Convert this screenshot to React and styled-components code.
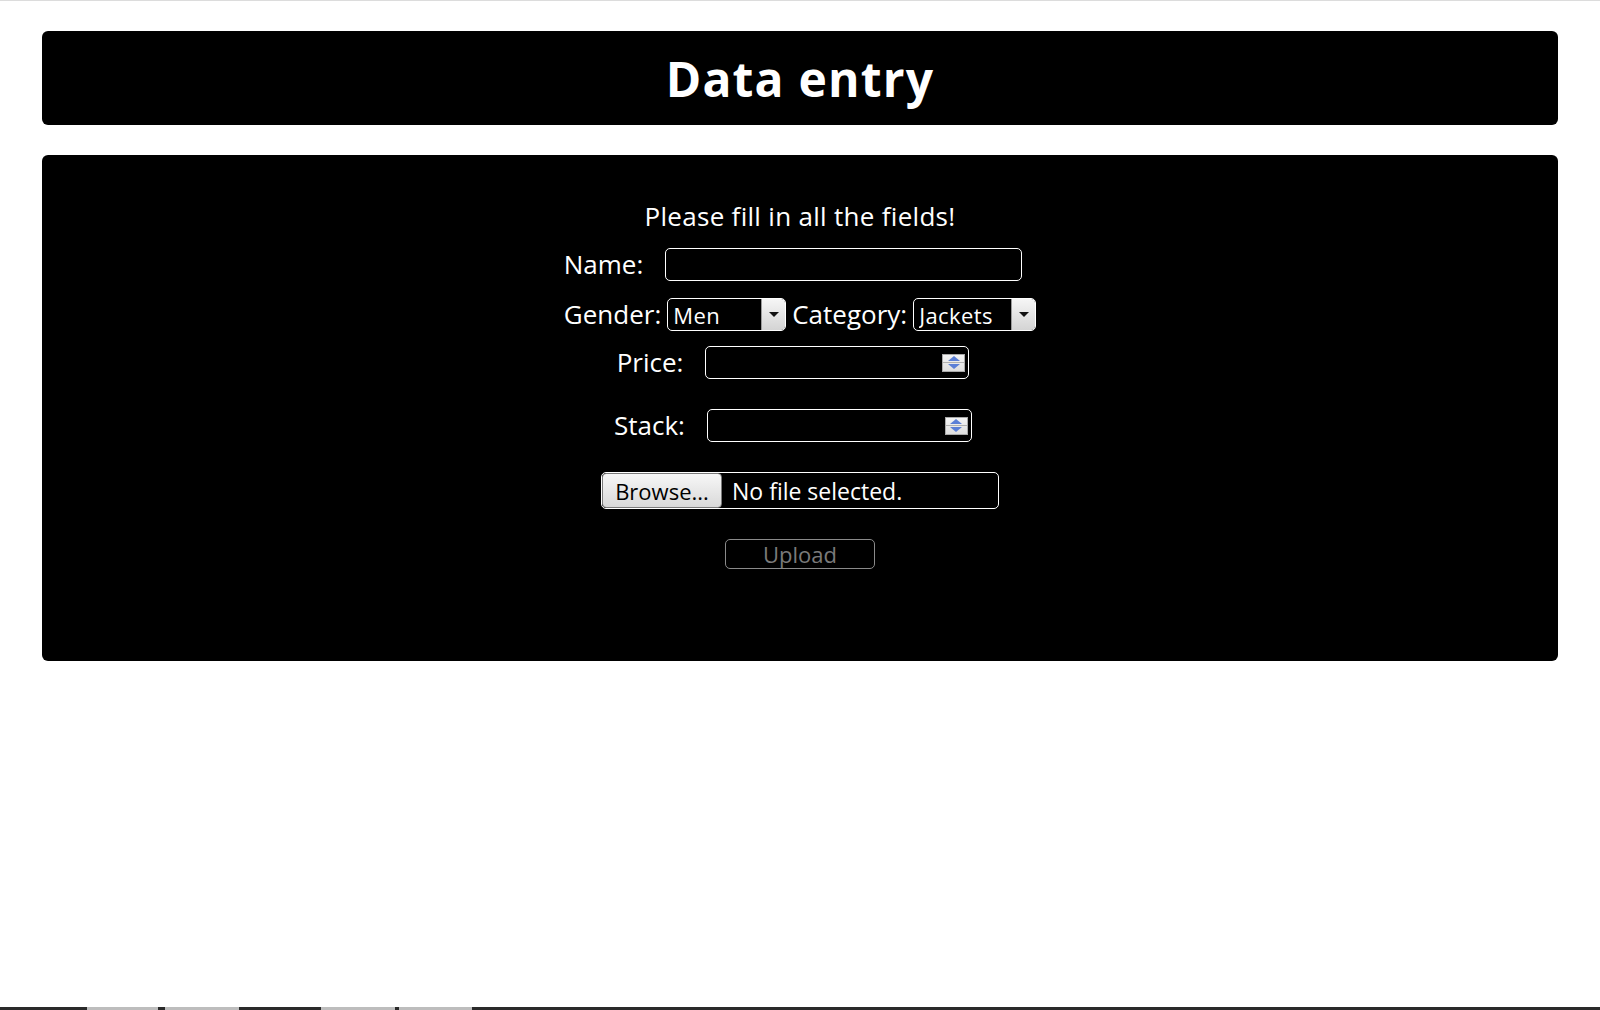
import React, { useState } from "react";
import styled, { createGlobalStyle } from "styled-components";

const GlobalStyle = createGlobalStyle`
    html, body {
        margin: 0;
        padding: 0;
        background: #ffffff;
    }
    body {
        border-top: 1px solid #dcdcdc;
        font-family: "Open Sans", "Noto Sans", sans-serif;
        min-height: 1009px;
    }
`;

const Page = styled.div`
    padding: 30px 42px 0px 42px;
    display: flex;
    flex-direction: column;
    gap: 30px;
`;

const Header = styled.header`
    background: #000;
    border-radius: 6px;
    height: 94px;
    display: flex;
    align-items: center;
    justify-content: center;
`;

const Title = styled.h1`
    margin: 0;
    color: #fff;
    font-size: 48px;
    font-weight: 700;
    letter-spacing: 1.2px;
`;

const Panel = styled.main`
    background: #000;
    border-radius: 6px;
    height: 506px;
    box-sizing: border-box;
    padding-top: 43px;
    display: flex;
    flex-direction: column;
    align-items: center;
    color: #fff;
`;

const Notice = styled.p`
    margin: 0;
    font-size: 26px;
    line-height: 36px;
    letter-spacing: 0.3px;
`;

const Row = styled.div`
    display: flex;
    align-items: center;
    justify-content: center;
    height: ${(props) => props.h || 33}px;
    gap: ${(props) => props.gap || 0}px;
    margin-top: ${(props) => props.mt || 0}px;
    padding-right: ${(props) => props.pr || 0}px;
`;

const Label = styled.label`
    font-size: 26px;
    line-height: 33px;
    margin-right: ${(props) => props.mr || 0}px;
`;

const TextInput = styled.input`
    width: ${(props) => props.w}px;
    height: 33px;
    box-sizing: border-box;
    background: #000;
    color: #fff;
    border: 1px solid #fff;
    border-radius: 5px;
    outline: none;
    font-family: inherit;
    font-size: 20px;
    padding: 0 6px;
`;

const Field = styled.div`
    width: ${(props) => props.w}px;
    height: 33px;
    box-sizing: border-box;
    border: 1px solid #fff;
    border-radius: 5px;
    display: flex;
    align-items: center;
    padding-right: 3px;
`;

const NumberInput = styled.input`
    flex: 1;
    min-width: 0;
    height: 100%;
    background: transparent;
    border: none;
    outline: none;
    color: #fff;
    font-family: inherit;
    font-size: 20px;
    padding: 0 6px;
    -moz-appearance: textfield;
    &::-webkit-inner-spin-button,
    &::-webkit-outer-spin-button {
        -webkit-appearance: none;
        margin: 0;
    }
`;

const Spinner = styled.div`
    width: 23px;
    height: 18px;
    box-sizing: border-box;
    border: 1px solid #a9a9a9;
    background: linear-gradient(#f4f4f4, #dedede);
    display: flex;
    flex-direction: column;
    align-items: center;
    justify-content: space-evenly;
`;

const Arrow = styled.span`
    width: 0;
    height: 0;
    border-left: 6px solid transparent;
    border-right: 6px solid transparent;
    ${(props) =>
        props.up
            ? "border-bottom: 5px solid #5b7fd6;"
            : "border-top: 5px solid #5b7fd6;"}
`;

const Divider = styled.span`
    width: 100%;
    height: 1px;
    background: #b0b0b0;
`;

const SelectBox = styled.div`
    width: ${(props) => props.w}px;
    height: 33px;
    box-sizing: border-box;
    border: 1px solid #fff;
    border-radius: 5px;
    display: flex;
    align-items: stretch;
    overflow: hidden;
    background: #000;
`;

const Select = styled.select`
    flex: 1;
    min-width: 0;
    appearance: none;
    background: transparent;
    border: none;
    outline: none;
    color: #fff;
    font-family: inherit;
    font-size: 22px;
    letter-spacing: 0.4px;
    padding: 0 5px;
    option {
        color: #000;
    }
`;

const DropButton = styled.span`
    width: 23px;
    background: linear-gradient(#f6f6f6, #d4d4d4);
    border-left: 1px solid #9a9a9a;
    display: flex;
    align-items: center;
    justify-content: center;
    &::after {
        content: "";
        border-left: 5px solid transparent;
        border-right: 5px solid transparent;
        border-top: 5px solid #111;
    }
`;

const FileBox = styled.label`
    width: 398px;
    height: 37px;
    box-sizing: border-box;
    border: 1px solid #fff;
    border-radius: 5px;
    display: flex;
    align-items: center;
    gap: 10px;
    cursor: pointer;
    input {
        display: none;
    }
`;

const BrowseButton = styled.span`
    width: 120px;
    height: 100%;
    box-sizing: border-box;
    border: 1px solid #7a7a7a;
    border-radius: 4px;
    background: linear-gradient(#f7f7f7, #d9d9d9);
    color: #000;
    font-family: "Open Sans", "Noto Sans", sans-serif;
    font-size: 22px;
    display: flex;
    align-items: center;
    justify-content: center;
`;

const FileText = styled.span`
    font-size: 23px;
`;

const UploadButton = styled.button`
    width: 150px;
    height: 30px;
    background: transparent;
    border: 1px solid #8a8a8a;
    border-radius: 5px;
    color: #7a7a7a;
    font-family: inherit;
    font-size: 22px;
    padding: 0;
    line-height: 1;
`;

const BottomStrip = styled.div`
    position: fixed;
    left: 0;
    right: 0;
    bottom: 0;
    height: 3px;
    background: #2a2a2a;
    display: flex;
`;

const StripTab = styled.span`
    width: ${(props) => props.w}px;
    margin-left: ${(props) => props.ml || 0}px;
    background: #bdbdbd;
`;

const NumberField = ({ width }) => (
    <Field w={width}>
        <NumberInput type='number' />
        <Spinner>
            <Arrow up />
            <Divider />
            <Arrow />
        </Spinner>
    </Field>
);

export default function App() {
    const [gender, setGender] = useState("Men");
    const [category, setCategory] = useState("Jackets");

    return (
        <>
            <GlobalStyle />
            <Page>
                <Header>
                    <Title>Data entry</Title>
                </Header>
                <Panel>
                    <Notice>Please fill in all the fields!</Notice>
                    <Row mt={14} pr={14}>
                        <Label mr={22}>Name:</Label>
                        <TextInput w={357} />
                    </Row>
                    <Row mt={17} gap={6}>
                        <Label>Gender:</Label>
                        <SelectBox w={119}>
                            <Select
                                value={gender}
                                onChange={(e) => setGender(e.target.value)}>
                                <option>Men</option>
                                <option>Women</option>
                            </Select>
                            <DropButton />
                        </SelectBox>
                        <Label>Category:</Label>
                        <SelectBox w={123}>
                            <Select
                                value={category}
                                onChange={(e) => setCategory(e.target.value)}>
                                <option>Jackets</option>
                                <option>Shirts</option>
                                <option>Trousers</option>
                                <option>Shoes</option>
                            </Select>
                            <DropButton />
                        </SelectBox>
                    </Row>
                    <Row mt={15} pr={14}>
                        <Label mr={22}>Price:</Label>
                        <NumberField width={264} />
                    </Row>
                    <Row mt={30} pr={14}>
                        <Label mr={22}>Stack:</Label>
                        <NumberField width={265} />
                    </Row>
                    <Row mt={30} h={37}>
                        <FileBox>
                            <input type='file' />
                            <BrowseButton>Browse...</BrowseButton>
                            <FileText>No file selected.</FileText>
                        </FileBox>
                    </Row>
                    <Row mt={30} h={30}>
                        <UploadButton disabled>Upload</UploadButton>
                    </Row>
                </Panel>
            </Page>
            <BottomStrip>
                <StripTab w={71} ml={87} />
                <StripTab w={74} ml={7} />
                <StripTab w={74} ml={82} />
                <StripTab w={73} ml={4} />
            </BottomStrip>
        </>
    );
}
